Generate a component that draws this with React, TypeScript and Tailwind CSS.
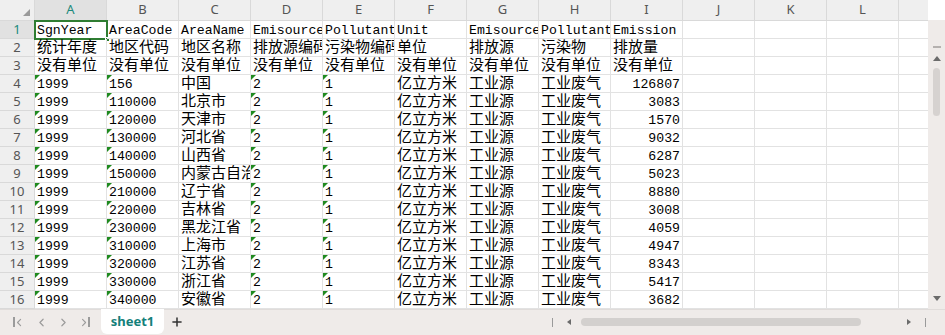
import { ChevronLeft, ChevronRight, Plus } from 'lucide-react'

const COLS = ['A', 'B', 'C', 'D', 'E', 'F', 'G', 'H', 'I', 'J', 'K', 'L', '']

const HEAD: string[][] = [
  ['SgnYear', 'AreaCode', 'AreaName', 'Emisource', 'Pollutant', 'Unit', 'Emisource', 'Pollutant', 'Emission'],
  ['统计年度', '地区代码', '地区名称', '排放源编码', '污染物编码', '单位', '排放源', '污染物', '排放量'],
  ['没有单位', '没有单位', '没有单位', '没有单位', '没有单位', '没有单位', '没有单位', '没有单位', '没有单位'],
]

const AREAS: [string, string, string][] = [
  ['156', '中国', '126807'],
  ['110000', '北京市', '3083'],
  ['120000', '天津市', '1570'],
  ['130000', '河北省', '9032'],
  ['140000', '山西省', '6287'],
  ['150000', '内蒙古自治区', '5023'],
  ['210000', '辽宁省', '8880'],
  ['220000', '吉林省', '3008'],
  ['230000', '黑龙江省', '4059'],
  ['310000', '上海市', '4947'],
  ['320000', '江苏省', '8343'],
  ['330000', '浙江省', '5417'],
  ['340000', '安徽省', '3682'],
]

type Cell = { v: string; flag?: boolean; num?: boolean }

const rows: Cell[][] = [
  ...HEAD.map((r) => r.map((v) => ({ v }))),
  ...AREAS.map(([code, name, val]) => [
    { v: '1999', flag: true },
    { v: code, flag: true },
    { v: name },
    { v: '2', flag: true },
    { v: '1', flag: true },
    { v: '亿立方米' },
    { v: '工业源' },
    { v: '工业废气' },
    { v: val, num: true },
  ]),
]

const hasCjk = (s: string) => /[\u3400-\u9fff]/.test(s)

function GridCell({ cell }: { cell?: Cell }) {
  return (
    <div className="relative w-[72px] h-[18px] flex-shrink-0 border-r border-b border-[#e2e2e2] overflow-hidden">
      {cell?.flag && (
        <div className="absolute left-0 top-0 w-0 h-0 border-t-[5px] border-r-[5px] border-t-[#1f8a1f] border-r-transparent" />
      )}
      {cell && (
        <div
          className={
            (cell.num ? 'justify-end pr-[2px] ' : 'pl-[2px] ') +
            (hasCjk(cell.v) ? 'text-[15px] pt-[1px] ' : 'text-[13.2px] pt-[2px] ') +
            "flex items-center h-full whitespace-nowrap leading-none text-black font-['Liberation_Mono','Noto_Sans_CJK_SC',monospace]"
          }
        >
          {cell.v}
        </div>
      )}
    </div>
  )
}

export default function App() {
  return (
    <div className="w-[945px] h-[335px] flex flex-col bg-white overflow-hidden font-['Noto_Sans','Liberation_Sans',sans-serif]">
      <div className="flex flex-1 min-h-0">
        {/* Sheet grid */}
        <div className="flex-1 overflow-hidden">
          {/* Column headers */}
          <div className="flex h-[21px]">
            <div className="relative w-[35px] flex-shrink-0 bg-[#efefef] border-r border-b border-[#d9d9d9]">
              <div className="absolute right-[4px] bottom-[4px] w-0 h-0 border-b-[7px] border-l-[7px] border-b-[#9a9a9a] border-l-transparent" />
            </div>
            {COLS.map((c, i) => (
              <div
                key={i}
                className={
                  (i === 0 ? 'bg-[#e1e1e1] text-[#1c8a7c] ' : 'bg-[#efefef] text-[#555] ') +
                  'w-[72px] flex-shrink-0 flex items-center justify-center text-[13px] border-r border-b border-[#d9d9d9]'
                }
              >
                {c}
              </div>
            ))}
          </div>

          {/* Rows */}
          {rows.map((r, ri) => (
            <div key={ri} className="flex">
              <div
                className={
                  (ri === 0 ? 'bg-[#e1e1e1] text-[#1c8a7c] ' : 'bg-[#efefef] text-[#555] ') +
                  'w-[35px] h-[18px] flex-shrink-0 flex items-center justify-center text-[13px] border-r border-b border-[#d9d9d9]'
                }
              >
                {ri + 1}
              </div>
              {COLS.map((_, ci) => (
                <div key={ci} className="relative">
                  <GridCell cell={r[ci]} />
                  {ri === 0 && ci === 0 && (
                    <>
                      <div className="absolute -left-[1px] -top-[1px] w-[74px] h-[20px] border-2 border-[#2f7d32]" />
                      <div className="absolute -right-[3px] -bottom-[3px] w-[5px] h-[5px] bg-[#2f7d32] border border-white" />
                    </>
                  )}
                </div>
              ))}
            </div>
          ))}
        </div>

        {/* Vertical scrollbar */}
        <div className="w-[17px] flex-shrink-0 bg-[#efebe9] flex flex-col items-center pt-[26px] pb-[8px] mt-[20px]">
          <div className="w-[8px] h-[2px] bg-[#b5b1af]" />
          <div className="mt-[8px] w-0 h-0 border-l-[4px] border-r-[4px] border-b-[5px] border-l-transparent border-r-transparent border-b-[#6b6b6b]" />
          <div className="mt-[7px] w-[7px] h-[48px] rounded-full bg-[#d6d2d0]" />
          <div className="flex-1" />
          <div className="w-0 h-0 border-l-[4px] border-r-[4px] border-t-[5px] border-l-transparent border-r-transparent border-t-[#6b6b6b]" />
        </div>
      </div>

      {/* Bottom bar */}
      <div className="h-[26px] flex-shrink-0 bg-[#efebe9] border-t border-[#e0dcda] flex items-start">
        <div className="flex items-center h-[24px] pl-[13px] text-[#9b9b9b]">
          <div className="flex items-center w-[12px]">
            <div className="w-[2px] h-[10px] bg-[#9b9b9b]" />
            <ChevronLeft size={13} strokeWidth={2.2} className="-ml-[2px]" />
          </div>
          <ChevronLeft size={13} strokeWidth={2.2} className="ml-[10px]" />
          <ChevronRight size={13} strokeWidth={2.2} className="ml-[9px]" />
          <div className="flex items-center w-[12px] ml-[8px]">
            <ChevronRight size={13} strokeWidth={2.2} />
            <div className="w-[2px] h-[10px] bg-[#9b9b9b] -ml-[2px]" />
          </div>
        </div>
        <div className="ml-[11px] -mt-[1px] w-[63px] h-[25px] bg-white rounded-b-[6px] flex items-center justify-center text-[13px] font-bold text-[#14807a]">
          sheet1
        </div>
        <div className="ml-[6px] h-[24px] flex items-center text-[#333]">
          <Plus size={14} strokeWidth={2.6} />
        </div>
        <div className="flex-1" />
        <div className="flex items-center h-[24px] pr-[19px]">
          <div className="w-[1px] h-[9px] bg-[#9a9a9a]" />
          <div className="ml-[14px] w-0 h-0 border-t-[3px] border-b-[3px] border-r-[4px] border-t-transparent border-b-transparent border-r-[#6b6b6b]" />
          <div className="ml-[10px] w-[280px] h-[8px] rounded-full bg-[#d3d0ce]" />
          <div className="ml-[46px] w-0 h-0 border-t-[3px] border-b-[3px] border-l-[4px] border-t-transparent border-b-transparent border-l-[#6b6b6b]" />
          <div className="ml-[14px] w-[1px] h-[9px] bg-[#9a9a9a]" />
        </div>
      </div>
    </div>
  )
}
